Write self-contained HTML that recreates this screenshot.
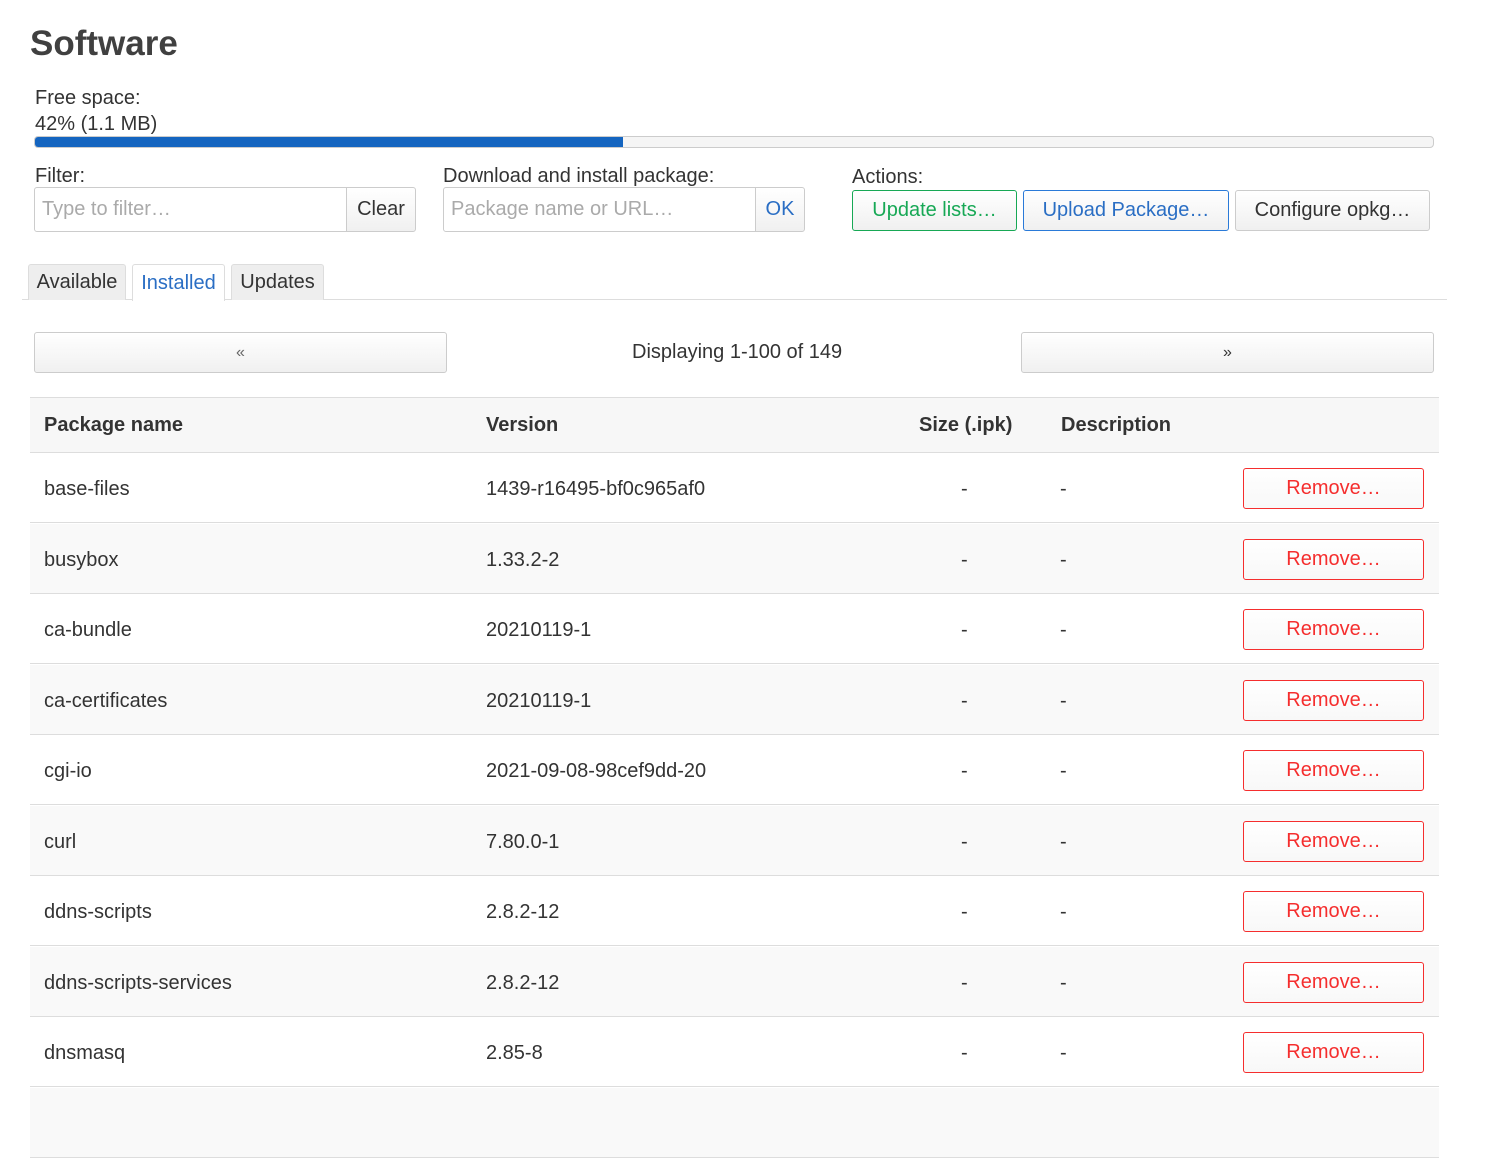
<!DOCTYPE html>
<html><head><meta charset="utf-8"><style>
*{box-sizing:border-box;margin:0;padding:0}
body{width:1491px;height:1097px;background:#fff;font-family:"Liberation Sans",sans-serif;color:#333;font-size:20px;position:relative;overflow:hidden}
.a{position:absolute;white-space:nowrap}
.btn{position:absolute;border:1px solid #ccc;border-radius:3px;background:linear-gradient(#fff,#f0f0f0);display:flex;align-items:center;justify-content:center;font-size:20px}
.inp{position:absolute;border:1px solid #ccc;border-radius:3px;color:#aaa;padding-left:7px;display:flex;align-items:center}
.tab{position:absolute;top:264px;height:36px;border:1px solid #ddd;border-bottom:none;border-radius:3px 3px 0 0;background:#eee;display:flex;align-items:center;justify-content:center}
.row{position:absolute;left:30px;width:1409px;height:70px;border-bottom:1px solid #ddd}
.row span{position:absolute;top:25px}
.rm{position:absolute;left:1213px;top:15px;width:181px;height:41px;border:1px solid #f52e2e;border-radius:3px;color:#f52e2e;display:flex;align-items:center;justify-content:center;background:linear-gradient(#fff,#f8f8f8)}
</style></head><body>
<div class="a" style="left:30px;top:24px;font-size:35px;font-weight:bold;color:#404040">Software</div>
<div class="a" style="left:35px;top:87px">Free space:</div>
<div class="a" style="left:35px;top:113px">42% (1.1 MB)</div>
<div class="a" style="left:34px;top:136px;width:1400px;height:12px;border:1px solid #ccc;border-radius:4px;background:#f5f5f5;overflow:hidden"><div style="width:588px;height:100%;background:#1565c0"></div></div>
<div class="a" style="left:35px;top:165px">Filter:</div>
<div class="inp" style="left:34px;top:187px;width:314px;height:45px;border-radius:3px 0 0 3px">Type to filter…</div>
<div class="btn" style="left:346px;top:187px;width:70px;height:45px;border-radius:0 3px 3px 0">Clear</div>
<div class="a" style="left:443px;top:165px">Download and install package:</div>
<div class="inp" style="left:443px;top:187px;width:314px;height:45px;border-radius:3px 0 0 3px">Package name or URL…</div>
<div class="btn" style="left:755px;top:187px;width:50px;height:45px;color:#2a6ec4;border-radius:0 3px 3px 0">OK</div>
<div class="a" style="left:852px;top:166px">Actions:</div>
<div class="btn" style="left:852px;top:190px;width:165px;height:41px;border-color:#17a855;color:#17a855">Update lists…</div>
<div class="btn" style="left:1023px;top:190px;width:206px;height:41px;border-color:#2a7ad8;color:#2a6ec4">Upload Package…</div>
<div class="btn" style="left:1235px;top:190px;width:195px;height:41px">Configure opkg…</div>
<div class="a" style="left:22px;top:299px;width:1425px;height:1px;background:#ddd"></div>
<div class="tab" style="left:28px;width:98px">Available</div>
<div class="tab" style="left:132px;width:93px;background:#fff;color:#2a6ec4;height:37px">Installed</div>
<div class="tab" style="left:231px;width:93px">Updates</div>
<div class="btn" style="left:34px;top:332px;width:413px;height:41px;color:#666;font-size:16px">«</div>
<div class="a" style="left:632px;top:341px">Displaying 1-100 of 149</div>
<div class="btn" style="left:1021px;top:332px;width:413px;height:41px;color:#333;font-size:16px">»</div>
<div class="a" style="left:30px;top:397px;width:1409px;height:56px;background:#f7f7f7;border-top:1px solid #ddd;border-bottom:1px solid #ddd;font-weight:bold">
<span class="a" style="left:14px;top:16px">Package name</span><span class="a" style="left:456px;top:16px">Version</span><span class="a" style="left:889px;top:16px">Size (.ipk)</span><span class="a" style="left:1031px;top:16px">Description</span></div>
<div class="row" style="top:453px"><span style="left:14px">base-files</span><span style="left:456px">1439-r16495-bf0c965af0</span><span style="left:931px">-</span><span style="left:1030px">-</span><div class="rm">Remove…</div></div>
<div class="row" style="top:523.5px;background:#f9f9f9"><span style="left:14px">busybox</span><span style="left:456px">1.33.2-2</span><span style="left:931px">-</span><span style="left:1030px">-</span><div class="rm">Remove…</div></div>
<div class="row" style="top:594px"><span style="left:14px">ca-bundle</span><span style="left:456px">20210119-1</span><span style="left:931px">-</span><span style="left:1030px">-</span><div class="rm">Remove…</div></div>
<div class="row" style="top:664.5px;background:#f9f9f9"><span style="left:14px">ca-certificates</span><span style="left:456px">20210119-1</span><span style="left:931px">-</span><span style="left:1030px">-</span><div class="rm">Remove…</div></div>
<div class="row" style="top:735px"><span style="left:14px">cgi-io</span><span style="left:456px">2021-09-08-98cef9dd-20</span><span style="left:931px">-</span><span style="left:1030px">-</span><div class="rm">Remove…</div></div>
<div class="row" style="top:805.5px;background:#f9f9f9"><span style="left:14px">curl</span><span style="left:456px">7.80.0-1</span><span style="left:931px">-</span><span style="left:1030px">-</span><div class="rm">Remove…</div></div>
<div class="row" style="top:876px"><span style="left:14px">ddns-scripts</span><span style="left:456px">2.8.2-12</span><span style="left:931px">-</span><span style="left:1030px">-</span><div class="rm">Remove…</div></div>
<div class="row" style="top:946.5px;background:#f9f9f9"><span style="left:14px">ddns-scripts-services</span><span style="left:456px">2.8.2-12</span><span style="left:931px">-</span><span style="left:1030px">-</span><div class="rm">Remove…</div></div>
<div class="row" style="top:1017px"><span style="left:14px">dnsmasq</span><span style="left:456px">2.85-8</span><span style="left:931px">-</span><span style="left:1030px">-</span><div class="rm">Remove…</div></div>
<div class="row" style="top:1087.5px;background:#f9f9f9"></div>
</body></html>
